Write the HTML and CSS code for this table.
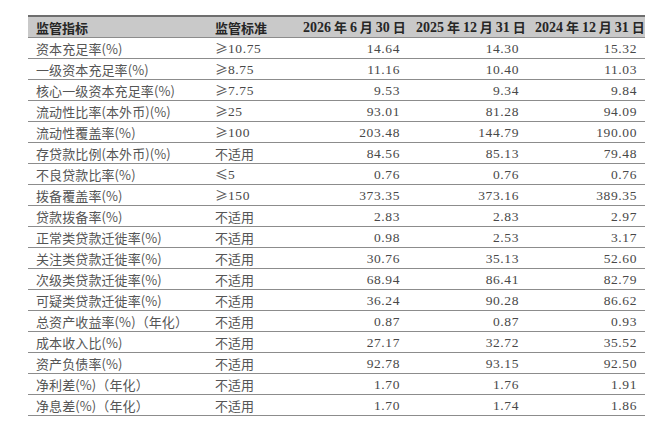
FILE: index.html
```html
<!DOCTYPE html>
<html lang="zh-CN">
<head>
<meta charset="utf-8">
<link rel="stylesheet" href="styles.css">
</head>
<body>
<table class="reg">
  <colgroup>
    <col class="c1"><col class="c2"><col class="c3"><col class="c4"><col class="c5">
  </colgroup>
  <thead>
    <tr>
      <th class="lbl">监管指标</th>
      <th class="lbl">监管标准</th>
      <th class="dt"><span class="d">2026</span> 年 <span class="d">6</span> 月 <span class="d">30</span> 日</th>
      <th class="dt"><span class="d">2025</span> 年 <span class="d">12</span> 月 <span class="d">31</span> 日</th>
      <th class="dt"><span class="d">2024</span> 年 <span class="d">12</span> 月 <span class="d">31</span> 日</th>
    </tr>
  </thead>
  <tbody>
    <tr><td>资本充足率(%)</td><td>≥<span class="n">10.75</span></td><td class="num">14.64</td><td class="num">14.30</td><td class="num">15.32</td></tr>
    <tr><td>一级资本充足率(%)</td><td>≥<span class="n">8.75</span></td><td class="num">11.16</td><td class="num">10.40</td><td class="num">11.03</td></tr>
    <tr><td>核心一级资本充足率(%)</td><td>≥<span class="n">7.75</span></td><td class="num">9.53</td><td class="num">9.34</td><td class="num">9.84</td></tr>
    <tr><td>流动性比率(本外币)(%)</td><td>≥<span class="n">25</span></td><td class="num">93.01</td><td class="num">81.28</td><td class="num">94.09</td></tr>
    <tr><td>流动性覆盖率(%)</td><td>≥<span class="n">100</span></td><td class="num">203.48</td><td class="num">144.79</td><td class="num">190.00</td></tr>
    <tr><td>存贷款比例(本外币)(%)</td><td>不适用</td><td class="num">84.56</td><td class="num">85.13</td><td class="num">79.48</td></tr>
    <tr><td>不良贷款比率(%)</td><td>≤<span class="n">5</span></td><td class="num">0.76</td><td class="num">0.76</td><td class="num">0.76</td></tr>
    <tr><td>拨备覆盖率(%)</td><td>≥<span class="n">150</span></td><td class="num">373.35</td><td class="num">373.16</td><td class="num">389.35</td></tr>
    <tr><td>贷款拨备率(%)</td><td>不适用</td><td class="num">2.83</td><td class="num">2.83</td><td class="num">2.97</td></tr>
    <tr><td>正常类贷款迁徙率(%)</td><td>不适用</td><td class="num">0.98</td><td class="num">2.53</td><td class="num">3.17</td></tr>
    <tr><td>关注类贷款迁徙率(%)</td><td>不适用</td><td class="num">30.76</td><td class="num">35.13</td><td class="num">52.60</td></tr>
    <tr><td>次级类贷款迁徙率(%)</td><td>不适用</td><td class="num">68.94</td><td class="num">86.41</td><td class="num">82.79</td></tr>
    <tr><td>可疑类贷款迁徙率(%)</td><td>不适用</td><td class="num">36.24</td><td class="num">90.28</td><td class="num">86.62</td></tr>
    <tr><td>总资产收益率(%)（年化）</td><td>不适用</td><td class="num">0.87</td><td class="num">0.87</td><td class="num">0.93</td></tr>
    <tr><td>成本收入比(%)</td><td>不适用</td><td class="num">27.17</td><td class="num">32.72</td><td class="num">35.52</td></tr>
    <tr><td>资产负债率(%)</td><td>不适用</td><td class="num">92.78</td><td class="num">93.15</td><td class="num">92.50</td></tr>
    <tr><td>净利差(%)（年化）</td><td>不适用</td><td class="num">1.70</td><td class="num">1.76</td><td class="num">1.91</td></tr>
    <tr><td>净息差(%)（年化）</td><td>不适用</td><td class="num">1.70</td><td class="num">1.74</td><td class="num">1.86</td></tr>
  </tbody>
</table>
</body>
</html>
```
FILE: styles.css
```css
html, body {
  margin: 0;
  padding: 0;
  background: #ffffff;
}
body {
  padding: 15px 0 0 28px;
  font-family: "Noto Sans CJK SC", "Liberation Serif", serif;
  font-size: 13px;
  color: #555555;
}
.reg {
  border-collapse: collapse;
  width: 617px;
  table-layout: fixed;
  border-top: 2px solid #6e6e6e;
}
.c1 { width: 179px; }
.c2 { width: 88px; }
.c3 { width: 113px; }
.c4 { width: 119px; }
.c5 { width: 118px; }
.reg th, .reg td {
  height: 20px;
  padding: 0 8px;
  border-bottom: 1px solid #8c8c8c;
  line-height: 15px;
  white-space: nowrap;
  vertical-align: middle;
  overflow: hidden;
}
.reg thead th {
  background: #c9c9c9;
  color: #262626;
  font-weight: 700;
  border-bottom: 1px solid #8c8c8c;
}
.reg .lbl {
  text-align: left;
}
.reg .dt {
  text-align: right;
}
.d {
  font-family: "Liberation Serif", serif;
  font-size: 14px;
  font-weight: 700;
}
.reg td.num {
  text-align: right;
  font-family: "Liberation Serif", serif;
  font-size: 13.5px;
  letter-spacing: 0.6px;
  color: #484848;
}
.n {
  font-family: "Liberation Serif", serif;
  font-size: 13.5px;
  letter-spacing: 0.6px;
  color: #484848;
}
.reg td:first-child {
  letter-spacing: 0.1px;
}
```
